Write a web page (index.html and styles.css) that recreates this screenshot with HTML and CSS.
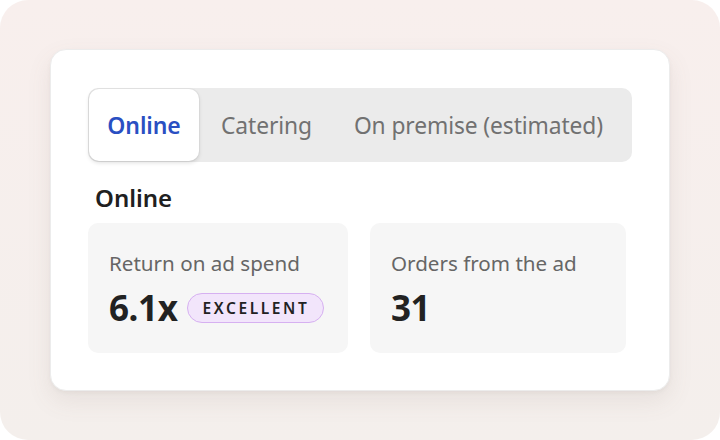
FILE: index.html
```html
<!DOCTYPE html>
<html>
<head>
<meta charset="utf-8">
<link rel="stylesheet" href="styles.css">
</head>
<body>
<div class="frame">
  <div class="card">
    <div class="tabs">
      <div class="tab active">Online</div>
      <div class="tab">Catering</div>
      <div class="tab">On premise (estimated)</div>
    </div>
    <h2 class="heading">Online</h2>
    <div class="stats">
      <div class="stat">
        <div class="label">Return on ad spend</div>
        <div class="value-row">
          <span class="value">6.1x</span>
          <span class="badge">EXCELLENT</span>
        </div>
      </div>
      <div class="stat">
        <div class="label">Orders from the ad</div>
        <div class="value-row">
          <span class="value">31</span>
        </div>
      </div>
    </div>
  </div>
</div>
</body>
</html>
```
FILE: styles.css
```css
html, body {
  margin: 0;
  padding: 0;
  background: #ffffff;
}
body {
  font-family: "Noto Sans", "Open Sans", sans-serif;
}
.frame {
  width: 720px;
  height: 440px;
  box-sizing: border-box;
  border-radius: 28px;
  background: linear-gradient(180deg, #f8efed 0%, #f4efec 100%);
  padding: 49px 50px 0 50px;
}
.card {
  width: 620px;
  height: 342px;
  box-sizing: border-box;
  background: #ffffff;
  border: 1px solid #ececec;
  border-radius: 16px;
  box-shadow: 0 10px 24px rgba(120, 100, 90, 0.10), 0 2px 4px rgba(0, 0, 0, 0.04);
  padding: 38px 37px 0 37px;
}
.tabs {
  display: flex;
  align-items: stretch;
  height: 74px;
  box-sizing: border-box;
  padding: 1px;
  background: #ebebeb;
  border-radius: 10px;
}
.tab {
  display: flex;
  align-items: center;
  padding: 0 20px 0 22px;
  font-size: 22.8px;
  color: #717171;
  letter-spacing: -0.1px;
}
.tab.active {
  width: 110px;
  box-sizing: border-box;
  justify-content: center;
  padding: 0;
  background: #ffffff;
  border-radius: 10px;
  color: #2a4fc2;
  font-weight: 600;
  font-size: 23px;
  box-shadow: 0 2px 4px rgba(0, 0, 0, 0.12), 0 0 0 1px rgba(0, 0, 0, 0.03);
}
.heading {
  margin: 20px 0 0 7px;
  font-size: 24px;
  line-height: 32px;
  font-weight: 600;
  color: #202020;
}
.stats {
  display: grid;
  grid-template-columns: 260px 256px;
  column-gap: 22px;
  margin-top: 9px;
}
.stat {
  height: 130px;
  box-sizing: border-box;
  background: #f6f6f6;
  border-radius: 10px;
  padding: 26px 20px 0 21px;
}
.label {
  font-size: 20.6px;
  line-height: 28px;
  color: #666666;
}
.value-row {
  display: flex;
  align-items: center;
  gap: 9px;
  margin-top: 13px;
  height: 36px;
}
.value {
  font-size: 35px;
  line-height: 36px;
  font-weight: 700;
  color: #222222;
  letter-spacing: -0.4px;
}
.badge {
  display: inline-flex;
  align-items: center;
  height: 30px;
  box-sizing: border-box;
  padding: 0 14px 0 15px;
  border-radius: 15px;
  background: #f2e5fb;
  border: 1.5px solid #d6b0f1;
  font-size: 15.5px;
  font-weight: 600;
  letter-spacing: 2.6px;
  color: #222222;
}
```
